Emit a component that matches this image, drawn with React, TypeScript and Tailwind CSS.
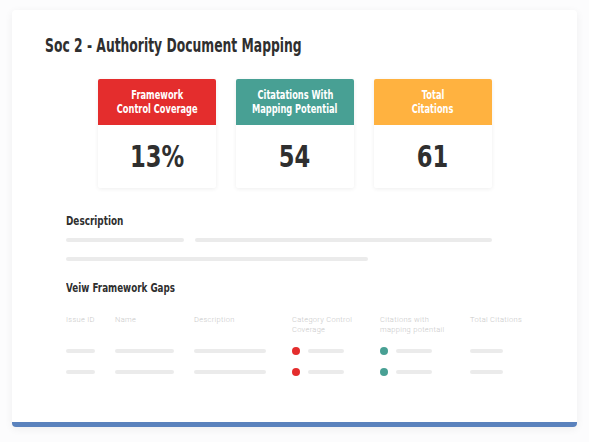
import React from "react";

const font = "font-['DejaVu_Sans',sans-serif] font-bold";

const stats = [
  { title: ["Framework", "Control Coverage"], value: "13%", color: "bg-[#e42d2d]" },
  { title: ["Citatations With", "Mapping Potential"], value: "54", color: "bg-[#48a094]" },
  { title: ["Total", "Citations"], value: "61", color: "bg-[#ffb240]" },
];

function Bar({ w }: { w: string }) {
  return <div className={`h-[4px] shrink-0 rounded-full bg-[#ebebeb] ${w}`} />;
}

function Row() {
  return (
    <div className="flex h-[21px] items-center">
      <div className="w-[49px] shrink-0"><Bar w="w-[29px]" /></div>
      <div className="w-[79px] shrink-0"><Bar w="w-[59px]" /></div>
      <div className="w-[98px] shrink-0"><Bar w="w-[72px]" /></div>
      <div className="flex w-[88px] shrink-0 items-center gap-[8px]">
        <span className="h-[8px] w-[8px] rounded-full bg-[#e42d2d]" />
        <Bar w="w-[36px]" />
      </div>
      <div className="flex w-[90px] shrink-0 items-center gap-[8px]">
        <span className="h-[8px] w-[8px] rounded-full bg-[#48a094]" />
        <Bar w="w-[36px]" />
      </div>
      <div className="shrink-0"><Bar w="w-[33px]" /></div>
    </div>
  );
}

export default function App() {
  return (
    <div className="h-[442px] w-[589px] bg-[#fcfcfd] pl-[12px] pt-[10px]">
      <div className="relative h-[417px] w-[565px] overflow-hidden rounded-[4px] bg-white shadow-[0_2px_8px_rgba(0,0,0,0.06)]">
        <h1 className={`${font} whitespace-nowrap pl-[33px] pt-[24px] text-[19px] leading-[23px] text-[#2f2f2f]`}>
          <span className="inline-block origin-left scale-x-[0.65]">Soc 2 - Authority Document Mapping</span>
        </h1>

        <div className="mt-[22px] flex gap-[20px] pl-[86px]">
          {stats.map((s) => (
            <div key={s.value} className="w-[118px] overflow-hidden rounded-[2px] bg-white shadow-[0_1px_4px_rgba(0,0,0,0.07)]">
              <div className={`${s.color} ${font} flex h-[46px] flex-col items-center justify-center whitespace-nowrap text-[12.5px] leading-[14px] text-white`}>
                {s.title.map((t) => (
                  <span key={t} className="inline-block scale-x-[0.66]">{t}</span>
                ))}
              </div>
              <div className={`${font} flex h-[63px] items-center justify-center text-[31px] text-[#2f2f2f]`}>
                <span className="inline-block scale-x-[0.73]">{s.value}</span>
              </div>
            </div>
          ))}
        </div>

        <div className="pl-[54px]">
          <h2 className={`${font} mt-[25px] whitespace-nowrap text-[12px] leading-[16px] text-[#2f2f2f]`}>
            <span className="inline-block origin-left scale-x-[0.74]">Description</span>
          </h2>
          <div className="mt-[9px] flex gap-[11px]">
            <Bar w="w-[118px]" />
            <Bar w="w-[297px]" />
          </div>
          <div className="mt-[15px]">
            <Bar w="w-[302px]" />
          </div>

          <h2 className={`${font} mt-[19px] whitespace-nowrap text-[12px] leading-[16px] text-[#2f2f2f]`}>
            <span className="inline-block origin-left scale-x-[0.73]">Veiw Framework Gaps</span>
          </h2>

          <div className="mt-[19px] flex font-['Roboto',sans-serif] text-[7.5px] font-light leading-[10px] tracking-[0.3px] text-[#c8c8c8]">
            <div className="w-[49px] shrink-0">Issue ID</div>
            <div className="w-[79px] shrink-0">Name</div>
            <div className="w-[98px] shrink-0">Description</div>
            <div className="w-[88px] shrink-0">Category Control<br />Coverage</div>
            <div className="w-[90px] shrink-0">Citations with<br />mapping potentail</div>
            <div className="shrink-0">Total Citations</div>
          </div>

          <div className="mt-[5px]">
            <Row />
            <Row />
          </div>
        </div>

        <div className="absolute bottom-0 left-0 h-[5px] w-full bg-[#5a82bd]" />
      </div>
    </div>
  );
}
